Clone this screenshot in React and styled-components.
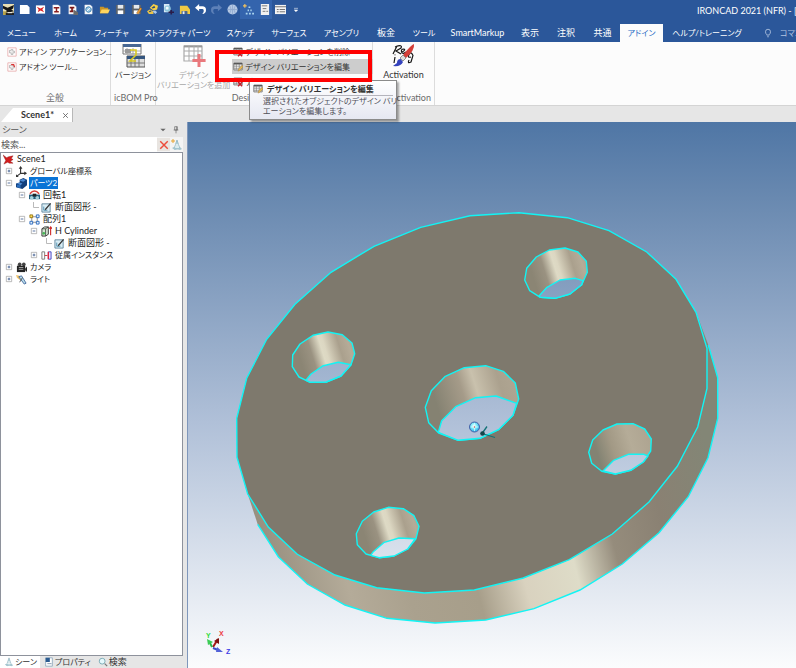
import React from "react";
import styled, { createGlobalStyle, css } from "styled-components";

const GlobalStyle = createGlobalStyle`
  * {
    box-sizing: border-box;
  }
  body {
    margin: 0;
    font-family: Lato, "Noto Sans CJK JP", sans-serif;
    font-feature-settings: "palt";
    font-size: 9px;
    line-height: 12px;
    color: #333;
  }
  button, input {
    font: inherit;
    font-feature-settings: inherit;
    color: inherit;
    border: none;
    background: none;
    padding: 0;
  }
  ul {
    list-style: none;
    margin: 0;
    padding: 0;
  }
`;

const Page = styled.div`
  display: flex;
  flex-direction: column;
  height: 100vh;
  overflow: hidden;
  background: #e6e6e6;
`;

const TitleBar = styled.header`
  display: flex;
  align-items: center;
  justify-content: space-between;
  height: 24px;
  flex: none;
  overflow: hidden;
  background: #2b579a;
`;

const QuickAccess = styled.div`
  display: flex;
  height: 19px;
  align-self: flex-start;
`;

const QuickButton = styled.button`
  display: flex;
  align-items: center;
  justify-content: center;
  width: 16px;
  height: 19px;
  flex: none;
  background: ${props => (props.$on ? "#3464ad" : "transparent")};
`;

const WindowTitle = styled.div`
  width: 99px;
  flex: none;
  height: 24px;
  line-height: 22px;
  overflow: hidden;
  white-space: nowrap;
  color: #fff;
`;

const TabBar = styled.nav`
  display: flex;
  height: 18px;
  flex: none;
  overflow: hidden;
  background: #2b579a;
`;

const RibbonTab = styled.button`
  display: flex;
  align-items: center;
  justify-content: center;
  flex: none;
  width: ${props => props.$width}px;
  padding-bottom: 1px;
  font-size: ${props => (props.$small ? 8 : 9)}px;
  white-space: nowrap;
  color: ${props => (props.$active ? "#2b6cc4" : "#fff")};
  background: ${props => (props.$active ? "#fcfcfc" : "transparent")};
`;

const CommandSearch = styled.button`
  display: flex;
  align-items: center;
  gap: 7px;
  margin-left: 12px;
  flex: none;
  white-space: nowrap;
  font-size: 8px;
  color: #b4c6e2;
`;

const Ribbon = styled.section`
  position: relative;
  display: flex;
  height: 64px;
  flex: none;
  background: #fcfcfc;
  border-bottom: 1px solid #d4d4d4;
`;

const Group = styled.div`
  display: flex;
  flex-direction: column;
  justify-content: space-between;
  flex: none;
  width: ${props => props.$width}px;
  padding: 2px 0 1px;
  border-right: 1px solid #dcdcdc;
`;

const GroupBody = styled.div`
  display: flex;
  justify-content: ${props => props.$align || "center"};
`;

const GroupLabel = styled.div`
  text-align: ${props => props.$align || "center"};
  padding: 0 3px;
  color: #6a6a6a;
  white-space: nowrap;
`;

const CommandList = styled.div`
  display: flex;
  flex-direction: column;
  padding-left: ${props => props.$indent || 0}px;
`;

const Command = styled.button`
  display: flex;
  align-items: center;
  gap: 2px;
  height: 15px;
  padding: 0 1px;
  white-space: nowrap;
  font-size: 8px;
  background: ${props => (props.$hot ? "#cdcdcd" : "transparent")};
`;

const BigCommand = styled.button`
  display: flex;
  flex-direction: column;
  align-items: center;
  gap: 2px;
  padding: 0 1px;
  font-size: ${props => (props.$latin ? 9 : 8)}px;
  line-height: 10px;
  white-space: nowrap;
  color: ${props => (props.$off ? "#a8a8a8" : "#333")};
`;

const Highlight = styled.div`
  position: absolute;
  left: 215px;
  top: 8px;
  width: 157px;
  height: 32px;
  border: 4px solid #f00;
  z-index: 3;
`;

const Tooltip = styled.div`
  position: absolute;
  left: 249px;
  top: 38px;
  width: 148px;
  height: 40px;
  padding: 2px 3px;
  border: 1px solid #8b8b8b;
  background: linear-gradient(#fff, #e6e8f2);
  box-shadow: 2px 2px 2px rgba(0, 0, 0, 0.35);
  z-index: 2;
  color: #50505a;
  font-size: 8px;
  line-height: 10px;
`;

const TooltipTitle = styled.div`
  display: flex;
  align-items: center;
  gap: 4px;
  height: 12px;
  white-space: nowrap;
  font-weight: 700;
  color: #333;
`;

const TooltipText = styled.div`
  margin-left: 10px;
  border-top: 1px solid #b4b4bc;
  white-space: nowrap;
`;

const DocStrip = styled.div`
  display: flex;
  align-items: flex-end;
  height: 16px;
  flex: none;
  background: #e6e6e6;
`;

const DocTab = styled.div`
  display: flex;
  align-items: center;
  justify-content: flex-end;
  gap: 8px;
  width: 73px;
  height: 14px;
  padding-right: 3px;
  border-right: 1px solid #b8b8b8;
  background: #fff;
  clip-path: polygon(13px 0, 100% 0, 100% 100%, 1px 100%);
  font-weight: 700;
`;

const Main = styled.main`
  display: flex;
  flex: 1;
  min-height: 0;
`;

const Panel = styled.aside`
  display: flex;
  flex-direction: column;
  width: 188px;
  flex: none;
  padding-right: 4px;
  border-right: 1px solid #7f97bb;
  background: #e6e6e6;
`;

const PanelHeader = styled.div`
  display: flex;
  align-items: center;
  justify-content: space-between;
  height: 15px;
  padding: 0 3px 0 2px;
  color: #555;
`;

const HeaderTools = styled.div`
  display: flex;
  gap: 5px;
`;

const SearchRow = styled.div`
  display: flex;
  align-items: center;
  height: 15px;
  background: #f4f4f4;
`;

const SearchInput = styled.input`
  flex: 1;
  min-width: 0;
  height: 15px;
  padding-left: 1px;
  background: #fff;
  outline: none;
  &::placeholder {
    color: #555;
  }
`;

const IconButton = styled.button`
  display: flex;
  align-items: center;
  justify-content: center;
  width: 13px;
  height: 13px;
  background: ${props => (props.$raised ? "#e8e4e0" : "transparent")};
`;

const Tree = styled.ul`
  flex: 1;
  min-height: 0;
  overflow: hidden;
  border: 1px solid #8e929c;
  background: #fff;
`;

const Row = styled.li`
  display: flex;
  align-items: center;
  gap: 2px;
  height: 12px;
  padding-left: ${props => props.$indent}px;
  white-space: nowrap;
`;

const Expander = styled.span`
  display: flex;
  justify-content: center;
  width: 11px;
`;

const RowLabel = styled.span`
  padding: 0 1px;
  font-size: ${props => (props.$small ? 8 : 9)}px;
  color: #222;
  ${props =>
    props.$selected &&
    css`
      color: #fff;
      background: #0a74d6;
    `}
`;

const PanelTabs = styled.div`
  display: flex;
  height: 12px;
`;

const PanelTab = styled.button`
  display: flex;
  align-items: center;
  gap: 1px;
  padding: 0 3px 0 4px;
  font-size: ${props => (props.$small ? 8 : 9)}px;
  white-space: nowrap;
  background: ${props => (props.$active ? "#fff" : "transparent")};
`;

const Viewport = styled.section`
  flex: 1;
  min-width: 0;
  svg {
    display: block;
    width: 100%;
    height: 100%;
  }
`;

const doc = <path d="M2 1h6l2 2v8H2z" fill="#fff" stroke="#d5dae5" strokeWidth=".5" />;
const table = (
  <>
    <path d="M1 1.5h10v8H1z" fill="#fff" stroke="#666" />
    <path d="M1 2h10" stroke="#555" strokeWidth="2" />
    <path d="M1 5h10M1 7.500h10M4 2v7M7.500 2v7" stroke="#777" strokeWidth=".8" />
  </>
);
const disk = (
  <>
    <path d="M1 1h10v10H1z" fill="#5b626b" />
    <path d="M3 1h6v4H3z" fill="#e4e8ec" />
    <path d="M3 7h6v4H3z" fill="#fff" />
  </>
);
const cone = (
  <>
    <path d="M6 1L9 10H3z" fill="#b9d8df" stroke="#83aab8" strokeWidth=".7" />
    <path d="M4.500 6h3M4 8h4" stroke="#fff" />
    <path d="M1 9l2-1 3 2-2 1zM7 10l2-2 2 2-2 1z" fill="#a4c5cf" />
  </>
);
const addinDoc = (
  <>
    <path d="M1 1h10v10H1z" fill="#fff" stroke="#e49a9a" strokeWidth=".8" />
    <path d="M3 4h2V3h2v2h2v2H7v2H5V7H3z" fill="#eee" stroke="#999" strokeWidth=".7" />
  </>
);
const sketch = (
  <>
    <path d="M1 2h9v9H1z" fill="#d9edf5" stroke="#547c94" strokeWidth=".9" />
    <path d="M3 5v4h4" fill="none" stroke="#4e8faf" />
    <path d="M4 8L10 1l1 1L5 9z" fill="#333" />
  </>
);

const icons = {
  logo: (
    <>
      <path d="M0 0h12v12H0z" fill="#e8dfb5" />
      <path d="M0 2l5 2 7-3-1 4-2 1 3 2-5 1-4 0 1-2-4-2z" fill="#151515" />
      <path d="M0 8h4v4H0z" fill="#b8a44a" />
      <path d="M3 9.500h9V12H3z" fill="#222" />
      <path d="M5 9h5v1H5z" fill="#fff" />
    </>
  ),
  doc: <path d="M1 1h8l2.500 2.500V11H1z" fill="#fff" />,
  sceneDoc: (
    <>
      <path d="M1 1.500h10v9H1z" fill="#fff" />
      <path d="M2 3l4 2 4-2-2 3 2 3-4-2-3 2 1-3z" fill="#dd2222" />
    </>
  ),
  partDoc: (
    <>
      {doc}
      <path d="M3 4h6M6 4v5M3.500 8.500h5" stroke="#8a1d1d" strokeWidth="1.600" />
    </>
  ),
  partDoc2: (
    <>
      {doc}
      <path d="M3 4h5M5.500 4v4M3 8h4" stroke="#7b1616" strokeWidth="1.800" />
      <path d="M7 6l5 3v3H7z" fill="#6b6b6b" />
    </>
  ),
  globeDoc: (
    <>
      {doc}
      <circle cx="6" cy="6" r="3" fill="#9ecae8" stroke="#367cad" />
      <path d="M4 8l4-4" stroke="#fff" />
    </>
  ),
  folder: (
    <>
      <path d="M1 3h4l1 1h4v6H1z" fill="#c99427" />
      <path d="M3 6h9l-2 4H1z" fill="#ffd55e" />
    </>
  ),
  save: disk,
  saveEdit: (
    <>
      {disk}
      <path d="M6 10l4-6 2 1-4 6z" fill="#f0a13c" stroke="#774a1d" strokeWidth=".5" />
    </>
  ),
  link: (
    <>
      <path d="M3 4l4-4 5 2-1 4-4 1z" fill="#f6cf47" />
      <path d="M5 4l3-2 1 2-3 1z" fill="#284b77" />
      <path d="M0 8l3-2 4 2v3H2z" fill="#e8c249" />
      <path d="M2 8l2-1 1 1-2 1z" fill="#284b77" />
      <path d="M6 8l3-1 2 2-2 2z" fill="#a9c9ef" />
    </>
  ),
  pick: (
    <>
      <path d="M1 0h6v9H1z" fill="#d8ebf7" />
      <circle cx="5" cy="5" r="3.500" fill="#8dc5dc" />
      <path d="M3 3h3v3H3z" fill="#f2fbff" />
      <path d="M6 9h6M9 6.500v5" stroke="#2a1c49" strokeWidth="1.800" />
    </>
  ),
  yellow: (
    <>
      <path d="M1 2h8l3 4v5H9V8H3v3H1z" fill="#efc944" />
      <path d="M3 8h6v3H3z" fill="#4a648b" />
      <path d="M4 8h2v3H4z" fill="#e9eef7" />
    </>
  ),
  undo: <path d="M0 4l4.500-4v2.500H8q4 0 4 4T8 11q2-2 1.500-4.500Q9 5.500 8 5.500H4.500V8z" fill="#fff" />,
  redo: <path d="M12 4L7.500 0v2.500H4q-4 0-4 4T4 11Q2 9 2.500 6.500 3 5.500 4 5.500h3.500V8z" fill="#5d80b8" />,
  sphere: (
    <>
      <circle cx="6" cy="6" r="5.500" fill="#b4c8e4" />
      <path d="M1 6h10M6 1v10M3 2q3 4 0 8M9 2q-3 4 0 8" fill="none" stroke="#8ba5ca" strokeWidth=".8" />
    </>
  ),
  nodes: (
    <>
      <path d="M0 2h4M2 0v4" stroke="#f5c25b" strokeWidth="1.200" />
      <path d="M6 3.500h2M5 7h1.500M8 7h1.500M3 10.500h2M6.500 10.500h2M10 10.500h2" stroke="#a9d4ef" strokeWidth="1.800" />
    </>
  ),
  list: (
    <>
      <path d="M2 0h9v12H2z" fill="#f1f1f1" />
      <path d="M3 2h6M4 5h4M4 8h3M8 8h2" stroke="#737373" />
    </>
  ),
  grid: (
    <>
      <path d="M0 1h12v10H0z" fill="#f4f4f4" />
      <path d="M0 3h12M2 6h2M5 6h6M2 8.500h2M5 8.500h6" stroke="#6a6a6a" />
    </>
  ),
  more: <path d="M3 3.500h6M3.500 6h5L6 8.500z" fill="#fff" stroke="#fff" strokeWidth=".8" />,
  bulb: (
    <path d="M4.500 8.500V8Q3 6.500 3 4.500a3 3 0 0 1 6 0Q9 6.500 7.500 8v.5zM5 10.500h2" fill="none" stroke="#b4c6e2" />
  ),
  addin: addinDoc,
  addon: (
    <>
      {addinDoc}
      <path d="M5 3l3 0 1 3" fill="none" stroke="#db3434" strokeWidth="1.500" />
    </>
  ),
  version: (
    <>
      <path d="M1 0h9v5H1z" fill="#fff" stroke="#777" strokeWidth=".5" />
      <path d="M1 0h9v1.500H1z" fill="#486894" />
      <path d="M2 2.500h3v2H2z" fill="#9a9a9a" />
      <path d="M1 3.500h9M3 2v3M6 2v3" stroke="#999" strokeWidth=".4" />
      <path d="M3 6h9v5.500H3z" fill="#ddd" stroke="#555" strokeWidth=".5" />
      <path d="M3 6h9v1.500H3z" fill="#34557e" />
      <path d="M5 7.500v4M7 7.500v4M9 7.500v4M3 9.500h9" stroke="#777" strokeWidth=".5" />
      <path d="M4.500 3h3v2.500l-3 3h3" fill="none" stroke="#d7c823" strokeWidth=".8" />
    </>
  ),
  tableAdd: (
    <>
      <path d="M1 1h9v7.500H1z" fill="#fff" stroke="#aaa" strokeWidth=".6" />
      <path d="M1 1.200h9" stroke="#999" />
      <path d="M1 3.500h9M1 6h9M3.500 1v7.500M6 1v7.500M8 1v7.500" stroke="#aaa" strokeWidth=".5" />
      <path d="M8.500 5v6.500M5.200 8.200h6.600" stroke="#e9787c" strokeWidth="1.500" />
    </>
  ),
  tableDelete: (
    <>
      {table}
      <path d="M6 6l5 5M11 6l-5 5" stroke="#c51c28" strokeWidth="1.700" />
    </>
  ),
  tableEdit: (
    <>
      {table}
      <path d="M6 11l1-3 4-4 1 2-4 4z" fill="#e8b950" stroke="#946c2b" strokeWidth=".4" />
    </>
  ),
  activation: (
    <>
      <path d="M1 5L3 1M2 1.500q4-1.500 3 .5L2.500 3.500 5 5M5.500 4q2-1 1-1.500-2 0-1 2 1 .5 2-.5M10 6.500Q8 7 9 5.200t2 .5L10 9Q8 10 9 8M2 6.500L1.500 9.500M2 5.300v.3" fill="none" stroke="#171717" strokeWidth=".6" />
      <path d="M11.500 0Q10 .5 6 5.500l1.500 1.500Q12 3 11.500 0z" fill="#d43e38" />
      <path d="M6 5.500L4.500 7 6 8.500 7.500 7z" fill="#ddd" stroke="#555" strokeWidth=".3" />
      <path d="M4.800 7.500Q3 7.500 3 9.500L1 11q4 .5 5-2z" fill="#3443bd" />
    </>
  ),
  close: <path d="M2 2l8 8M10 2l-8 8" stroke="#666" strokeWidth="1.500" />,
  down: <path d="M2 4h8L6 8z" fill="#666" />,
  pin: <path d="M4 1h4v5H4zM2.500 6h7M6 6v5M7 1v5" fill="none" stroke="#666" />,
  clear: <path d="M1.500 1.500l9 9M10.500 1.500l-9 9" stroke="#ec4b3a" strokeWidth="1.700" />,
  filter: (
    <>
      {cone}
      <path d="M0 2h4M2 0v4" stroke="#e9a633" />
    </>
  ),
  scene: (
    <path d="M0 1l4 3 2-1 5-1-2 3 2 1-3 2 3 2-4 0-2-1-4 2 2-4z" fill="#d51c1c" stroke="#7e1414" strokeWidth=".4" />
  ),
  axes: (
    <>
      <path d="M5 1v7h6M5 8L1 11" fill="none" stroke="#333" strokeWidth="1.200" />
      <path d="M3 3l2-3 2 3zM9 6l3 2-3 2zM0 9v3h3z" fill="#333" />
    </>
  ),
  part: (
    <>
      <path d="M0 6l4-1V2l4-2 4 2v6l-5 4-7-2z" fill="#123f7c" />
      <path d="M4 3l3-2 4 1-3 2zM1 6l3-1 3 1-2 2z" fill="#4c8ad4" />
      <path d="M1 7l4 1v3l-4-1z" fill="#2a6ebd" />
    </>
  ),
  spin: (
    <>
      <path d="M1 4Q6-2 11 4" fill="none" stroke="#d9423b" strokeWidth="1.700" />
      <path d="M0 5h12v5H0z" fill="#245f7e" />
      <circle cx="3" cy="8.500" r="2" fill="#a9d2dc" />
      <circle cx="9" cy="8.500" r="2" fill="#a9d2dc" />
      <path d="M4 4h4v3H4z" fill="#222" />
    </>
  ),
  sketch,
  pattern: (
    <>
      <path d="M3 3h6v6H3z" fill="none" stroke="#888" />
      <path d="M1 1h3v3H1z" fill="#ffdf5a" stroke="#977513" />
      <path d="M8 1h3v3H8zM1 8h3v3H1zM8 8h3v3H8z" fill="#e3f1ff" stroke="#2a69bd" />
    </>
  ),
  cylinder: (
    <>
      <path d="M1 3l3-2h4v8l-3 2H1z" fill="#d5e7d2" stroke="#333" />
      <path d="M1 3h4v8M5 3l3-2" fill="none" stroke="#333" strokeWidth=".8" />
      <circle cx="3" cy="8" r="1.500" fill="#47b658" />
      <path d="M10.500 2v8M9 3l1.500-2L12 3" fill="none" stroke="#cf2828" strokeWidth="1.200" />
    </>
  ),
  instance: (
    <>
      <path d="M1 2h3v8H1z" fill="#fff" stroke="#777" />
      <path d="M4 6h3" stroke="#c33" />
      <path d="M8 2h3v8H8z" fill="#eadcff" stroke="#4048c2" />
      <path d="M8 2v8" stroke="#dc2640" strokeWidth="1.500" />
    </>
  ),
  camera: (
    <>
      <circle cx="4" cy="2.500" r="2" fill="#444" />
      <circle cx="8.500" cy="2.500" r="2" fill="#444" />
      <path d="M1 4h9v7H1z" fill="#242424" />
      <path d="M10 7l2-2v6l-2-2z" fill="#242424" />
      <path d="M3 6h5M3 8h5" stroke="#aaa" />
    </>
  ),
  light: (
    <>
      <path d="M0 1l4 1 3 3-2 2-4-3z" fill="#f2c46a" />
      <path d="M3 3l6 8 2-1-5-8z" fill="#b9dce9" stroke="#355e97" strokeWidth=".9" />
      <path d="M7 4L4 9" stroke="#555" />
    </>
  ),
  plus: (
    <>
      <path d="M2 2h8v8H2z" fill="#fff" stroke="#999" />
      <path d="M4 6h4M6 4v4" stroke="#34538b" strokeWidth="1.200" />
    </>
  ),
  minus: (
    <>
      <path d="M2 2h8v8H2z" fill="#fff" stroke="#999" />
      <path d="M4 6h4" stroke="#34538b" strokeWidth="1.200" />
    </>
  ),
  branch: <path d="M6 0v6h6" fill="none" stroke="#b4b4b4" />,
  cone,
  property: (
    <>
      <path d="M2 1h8v10H2z" fill="#fff" stroke="#8ba6ba" />
      <path d="M2 1h5v5H2z" fill="#2b5b91" />
      <path d="M4 8h5" stroke="#728ca4" />
    </>
  ),
  magnifier: (
    <>
      <circle cx="5" cy="5" r="3.500" fill="#e5f8fc" stroke="#6fa2ad" />
      <path d="M8 8l3 3" stroke="#777" strokeWidth="1.500" />
    </>
  )
};

function Icon({ name, size = 10 }) {
  return (
    <svg width={size} height={size} viewBox="0 0 12 12" aria-hidden="true">
      {icons[name]}
    </svg>
  );
}

const quickItems = [
  ["logo", "IRONCAD"],
  ["doc", "New"],
  ["sceneDoc", "New scene"],
  ["partDoc", "New part"],
  ["partDoc2", "New drawing"],
  ["globeDoc", "Web"],
  ["folder", "Open"],
  ["save", "Save"],
  ["saveEdit", "Save as"],
  ["link", "Link"],
  ["pick", "Pick"],
  ["yellow", "Catalog"],
  ["undo", "Undo"],
  ["redo", "Redo"],
  ["sphere", "Render"],
  ["nodes", "Scene browser", true],
  ["list", "Property browser", true],
  ["grid", "Options"],
  ["more", "Customize"]
];

const ribbonTabs = [
  ["メニュー", 43],
  ["ホーム", 45],
  ["フィーチャ", 47],
  ["ストラクチャ パーツ", 85],
  ["スケッチ", 41],
  ["サーフェス", 56],
  ["アセンブリ", 49],
  ["板金", 40],
  ["ツール", 36],
  ["SmartMarkup", 71],
  ["表示", 34],
  ["注釈", 38],
  ["共通", 35],
  ["アドイン", 43],
  ["ヘルプ/トレーニング", 88]
];
const largeTabs = ["板金", "SmartMarkup", "表示", "注釈", "共通"];

const treeRows = [
  { icon: "scene", label: "Scene1", indent: 2 },
  { icon: "axes", label: "グローバル座標系", indent: 2, sign: "plus", small: true },
  { icon: "part", label: "パーツ2", indent: 2, sign: "minus", small: true, selected: true },
  { icon: "spin", label: "回転1", indent: 15, sign: "minus" },
  { icon: "sketch", label: "断面図形 -", indent: 27, sign: "branch" },
  { icon: "pattern", label: "配列1", indent: 15, sign: "minus" },
  { icon: "cylinder", label: "H Cylinder", indent: 27, sign: "minus" },
  { icon: "sketch", label: "断面図形 -", indent: 40, sign: "branch" },
  { icon: "instance", label: "従属インスタンス", indent: 27, sign: "plus", small: true },
  { icon: "camera", label: "カメラ", indent: 2, sign: "plus", small: true },
  { icon: "light", label: "ライト", indent: 2, sign: "plus", small: true }
];

// wall is the top rim of the hole, floor the part that is seen through
const holes = [
  {
    wall: "292.7,355 300,344 313,335.3 328,332 342.3,334.7 352,343 354.7,353.7 351,364.7 341,376 326.3,382 310.3,382.3 299,377 292.3,366.7",
    floor: "306,380.3 311,374 323.3,365.7 338.3,362.3 351,364.7 341,376 326.3,382 310.3,382.3",
    shade: "brightWall"
  },
  {
    wall: "526.7,268.3 536.3,257 549.3,250 565,248 578,252 586.3,261.3 587.3,272.3 581.7,284.7 570,294 555,298.3 540.3,297.3 529.7,290.7 524.7,280",
    floor: "539,296 547,287.3 560,280 575.3,278.3 583,280.7 581.7,284.7 570,294 555,298.3 540.3,297.3",
    shade: "brightWall"
  },
  {
    wall: "592.7,440 603,430 617,424 633,423.7 644.7,429 651.3,439 650.7,451 643.3,462 630.7,470.3 615.3,474 601.7,471.3 591.7,463.3 588.7,452.3",
    floor: "603,471 613.7,460.3 628.3,454.3 644,454.3 648,456 643.3,462 630.7,470.3 615.3,474",
    shade: "dullWall"
  },
  {
    wall: "356.3,533.7 362.3,521.3 373.7,512 388.3,507.3 403.3,508.7 414,515.7 419,526.3 416,538.7 407.7,549 394,556 379,557.7 366,554 357.3,544.7",
    floor: "370.7,555.3 373.3,551.7 384.3,542.3 399,538 415.3,538.7 407.7,549 394,556 379,557.7",
    shade: "brightWall"
  },
  {
    wall: "431.3,390.7 445.3,376.3 464.3,367.7 485.7,365.7 503.3,371.3 515.3,383 518.7,399 513,415.3 499,429.3 480,438.3 458.3,440.3 438.7,433 428.7,422.7 425.3,407.3",
    floor: "438.3,432.3 441.7,420.7 455.7,406.7 475.7,397.7 496,396 516.7,403.3 513,415.3 499,429.3 480,438.3 458.3,440.3",
    shade: "centerWall"
  }
];

const face =
  "236.7,418.3 246.7,378.3 266.7,339.3 295,304.3 331,272.3 374,246.3 420.7,227.3 470,215.7 519,212.7 567.3,217.7 609,230.7 646.7,252 676,279.3 696,312.3 707,348.3 707,388.3 697.7,427 677.3,466.3 649,502 612.3,534 569.3,559.7 523.3,578 474.3,590 424.3,593 376.7,587.7 335,575 297.3,554.3 268.3,527 247.7,494 237,457.3";
const rim =
  "708.3,345 717.7,377.7 717.7,418.3 708,457.7 688.3,496.7 659,532.7 622.3,564 580,590 534,608.7 485.7,620 435,623 387,618.3 345,605 307.3,584 278.3,556.7 257.7,524.3";

function Model() {
  return (
    <svg viewBox="188 122 608 546" preserveAspectRatio="xMidYMid slice" role="img" aria-label="3D model">
      <defs>
        <linearGradient id="sky" gradientUnits="userSpaceOnUse" x1="0" y1="122" x2="0" y2="668">
          <stop offset="0" stopColor="#4f76a5" />
          <stop offset=".14" stopColor="#6989b0" />
          <stop offset=".55" stopColor="#b0c0d8" />
          <stop offset="1" stopColor="#fbfcfd" />
        </linearGradient>
        <linearGradient id="side" gradientUnits="userSpaceOnUse" x1="248" y1="580" x2="710" y2="460">
          <stop offset="0" stopColor="#8e8778" />
          <stop offset=".2" stopColor="#b4ab99" />
          <stop offset=".32" stopColor="#aaa18e" />
          <stop offset=".46" stopColor="#a79e8a" />
          <stop offset=".56" stopColor="#d9d2bf" />
          <stop offset=".67" stopColor="#dedcc8" />
          <stop offset=".76" stopColor="#958c7c" />
          <stop offset=".87" stopColor="#8a8173" />
          <stop offset="1" stopColor="#838676" />
        </linearGradient>
        <linearGradient id="brightWall" x1="0" y1=".25" x2="1" y2="0">
          <stop offset=".05" stopColor="#8b8574" />
          <stop offset=".25" stopColor="#9a9281" />
          <stop offset=".42" stopColor="#dedac5" />
          <stop offset=".48" stopColor="#dcd7c2" />
          <stop offset=".7" stopColor="#aaa08d" />
          <stop offset=".85" stopColor="#b5ab98" />
          <stop offset="1" stopColor="#a89e8b" />
        </linearGradient>
        <linearGradient id="dullWall" x1="0" y1=".25" x2="1" y2="0">
          <stop offset=".05" stopColor="#838373" />
          <stop offset=".3" stopColor="#a29985" />
          <stop offset=".6" stopColor="#b5ac98" />
          <stop offset="1" stopColor="#aca28f" />
        </linearGradient>
        <linearGradient id="centerWall" x1="0" y1=".25" x2="1" y2="0">
          <stop offset=".05" stopColor="#858272" />
          <stop offset=".35" stopColor="#a59b89" />
          <stop offset=".5" stopColor="#c9c1ad" />
          <stop offset=".75" stopColor="#aba18e" />
          <stop offset="1" stopColor="#b1a794" />
        </linearGradient>
        <radialGradient id="ball" cx=".45" cy=".4">
          <stop offset="0" stopColor="#fff" />
          <stop offset=".5" stopColor="#8ceefa" />
          <stop offset="1" stopColor="#39b9ea" />
        </radialGradient>
      </defs>
      <rect x="188" y="122" width="608" height="546" fill="url(#sky)" />
      <polygon points={`696,312.3 ${rim} 247.7,494 400,400`} fill="url(#side)" />
      <polyline points={rim} fill="none" stroke="#12f4f4" strokeWidth="1.400" />
      <polygon points={face} fill="#7e796d" stroke="#12f4f4" strokeWidth="1.400" />
      {holes.map(hole => (
        <g key={hole.wall} stroke="#12f4f4" strokeWidth="1.400" strokeLinejoin="round">
          <polygon points={hole.wall} fill={`url(#${hole.shade})`} />
          <polygon points={hole.floor} fill="url(#sky)" />
        </g>
      ))}
      <circle cx="474.500" cy="427" r="5" fill="url(#ball)" stroke="#4660a8" />
      <path d="M474.500 423v8M470.500 427h8" stroke="#d5fbff" strokeWidth=".8" />
      <circle cx="474.500" cy="427" r=".7" fill="#cf4545" />
      <path d="M482 433.500l5-7M482 433.500l13 4" stroke="#147276" strokeWidth="1.300" />
      <circle cx="482.500" cy="433.500" r="2.300" fill="#12464a" />
      <path d="M213 647l5-8" stroke="#a81818" strokeWidth="2" />
      <path d="M214 641l5-3v6z" fill="#7d1010" />
      <path d="M212 647l-2-4" stroke="#2cb54b" strokeWidth="2" />
      <path d="M208 645l-1-6 6 3z" fill="#3bcc55" />
      <path d="M213 648l5 2" stroke="#3c4dc7" strokeWidth="2" />
      <path d="M217 647l6 5-7 0z" fill="#5262d8" />
      <g fontFamily="Liberation Sans, sans-serif" fontSize="7" fontWeight="700">
        <text x="219" y="636" fill="#ed3d42">X</text>
        <text x="206" y="638" fill="#2edb3a">Y</text>
        <text x="226" y="654" fill="#3b3be6">Z</text>
      </g>
    </svg>
  );
}

function App() {
  return (
    <Page>
      <GlobalStyle />
      <TitleBar>
        <QuickAccess>
          {quickItems.map(([icon, label, on]) => (
            <QuickButton key={icon} $on={on} aria-label={label}>
              <Icon name={icon} size={icon === "more" ? 8 : 11} />
            </QuickButton>
          ))}
        </QuickAccess>
        <WindowTitle>IRONCAD 2021 (NFR) - [Scene1]</WindowTitle>
      </TitleBar>
      <TabBar>
        {ribbonTabs.map(([label, width]) => (
          <RibbonTab
            key={label}
            $width={width}
            $active={label === "アドイン"}
            $small={!largeTabs.includes(label)}
          >
            {label}
          </RibbonTab>
        ))}
        <CommandSearch>
          <Icon name="bulb" />
          コマンド
        </CommandSearch>
      </TabBar>
      <Ribbon>
        <Group $width={111}>
          <GroupBody $align="flex-start">
            <CommandList $indent={6}>
              <Command>
                <Icon name="addin" />
                アドイン アプリケーション...
              </Command>
              <Command>
                <Icon name="addon" />
                アドオン ツール...
              </Command>
            </CommandList>
          </GroupBody>
          <GroupLabel>全般</GroupLabel>
        </Group>
        <Group $width={45}>
          <GroupBody>
            <BigCommand>
              <Icon name="version" size={24} />
              バージョン
            </BigCommand>
          </GroupBody>
          <GroupLabel>icBOM Pro</GroupLabel>
        </Group>
        <Group $width={217}>
          <GroupBody $align="flex-start">
            <BigCommand $off disabled>
              <Icon name="tableAdd" size={24} />
              <span>
                デザイン
                <br />
                バリエーションを追加
              </span>
            </BigCommand>
            <CommandList $indent={1}>
              <Command>
                <Icon name="tableDelete" />
                デザイン バリエーションを削除
              </Command>
              <Command $hot>
                <Icon name="tableEdit" />
                デザイン バリエーションを編集
              </Command>
              <Command>
                <Icon name="tableDelete" />
                デザイン バリエーションをすべて削除
              </Command>
            </CommandList>
          </GroupBody>
          <GroupLabel>Design Variation</GroupLabel>
        </Group>
        <Group $width={62}>
          <GroupBody>
            <BigCommand $latin>
              <Icon name="activation" size={24} />
              Activation
            </BigCommand>
          </GroupBody>
          <GroupLabel $align="right">Activation</GroupLabel>
        </Group>
        <Tooltip role="tooltip">
          <TooltipTitle>
            <Icon name="tableEdit" />
            デザイン バリエーションを編集
          </TooltipTitle>
          <TooltipText>
            選択されたオブジェクトのデザイン バリ
            <br />
            エーションを編集します。
          </TooltipText>
        </Tooltip>
        <Highlight />
      </Ribbon>
      <DocStrip>
        <DocTab>
          Scene1*
          <Icon name="close" size={7} />
        </DocTab>
      </DocStrip>
      <Main>
        <Panel>
          <PanelHeader>
            シーン
            <HeaderTools>
              <Icon name="down" size={8} />
              <Icon name="pin" size={8} />
            </HeaderTools>
          </PanelHeader>
          <SearchRow>
            <SearchInput aria-label="検索" placeholder="検索..." />
            <IconButton $raised aria-label="クリア">
              <Icon name="clear" />
            </IconButton>
            <IconButton aria-label="フィルタ">
              <Icon name="filter" size={12} />
            </IconButton>
          </SearchRow>
          <Tree>
            {treeRows.map((row, i) => (
              <Row key={i} $indent={row.indent}>
                {row.sign && (
                  <Expander>
                    <Icon name={row.sign} size={row.sign === "branch" ? 11 : 8} />
                  </Expander>
                )}
                <Icon name={row.icon} size={11} />
                <RowLabel $selected={row.selected} $small={row.small}>
                  {row.label}
                </RowLabel>
              </Row>
            ))}
          </Tree>
          <PanelTabs>
            <PanelTab $active $small>
              <Icon name="cone" />
              シーン
            </PanelTab>
            <PanelTab $small>
              <Icon name="property" />
              プロパティ
            </PanelTab>
            <PanelTab>
              <Icon name="magnifier" />
              検索
            </PanelTab>
          </PanelTabs>
        </Panel>
        <Viewport>
          <Model />
        </Viewport>
      </Main>
    </Page>
  );
}

export default App;
